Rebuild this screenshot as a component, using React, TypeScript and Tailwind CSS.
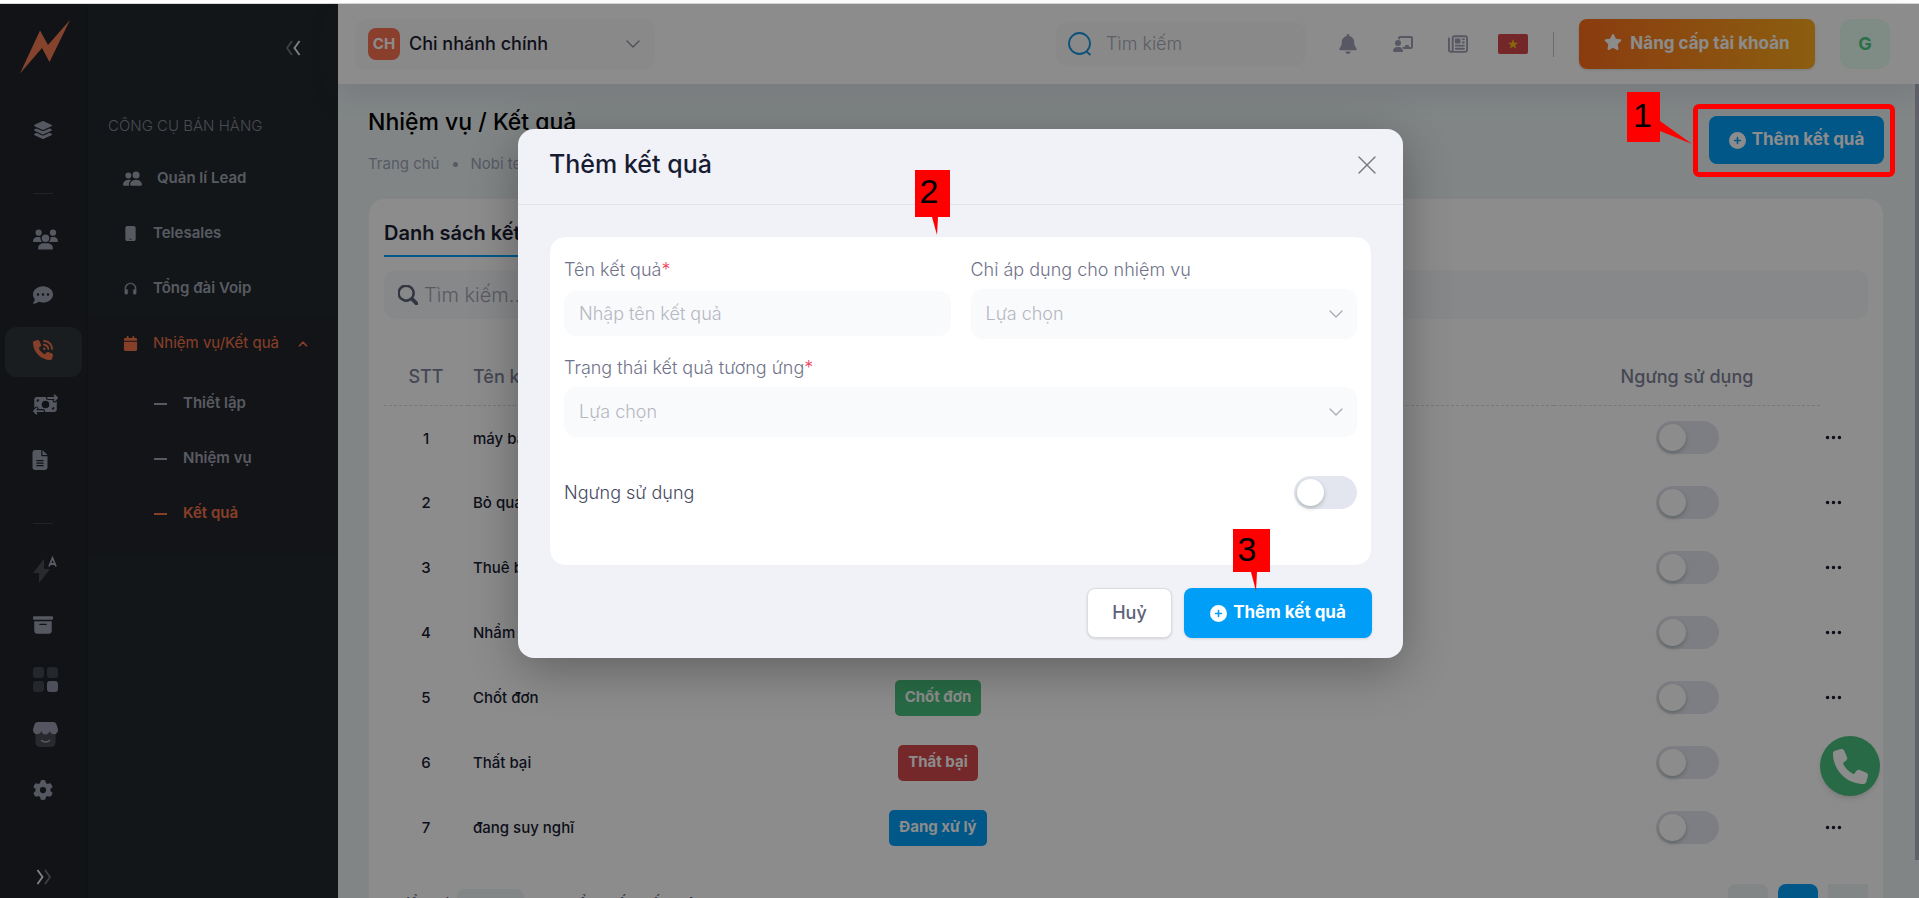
import { useState } from 'react'
import type { ReactNode } from 'react'
import { clsx } from 'clsx'
import {
  FaBell,
  FaCalendar,
  FaChalkboardUser,
  FaCirclePlus,
  FaCommentDots,
  FaFileLines,
  FaGear,
  FaLayerGroup,
  FaMobile,
  FaMoneyBillTransfer,
  FaPhone,
  FaPhoneVolume,
  FaRegNewspaper,
  FaStar,
  FaUsers,
} from 'react-icons/fa6'
import { BsArchiveFill, BsHeadphones, BsPeopleFill, BsSearch, BsThreeDots } from 'react-icons/bs'
import { ChevronDown, ChevronUp, X } from 'lucide-react'

type Result = { id: number; name: string; status: string; tone: string }

const GREEN = 'bg-[#49c17e]'
const RED = 'bg-[#d44a4d]'
const BLUE = 'bg-[#009ef7]'

const RESULTS: Result[] = [
  { id: 1, name: 'máy bận', status: 'Đang xử lý', tone: BLUE },
  { id: 2, name: 'Bỏ qua', status: 'Thất bại', tone: RED },
  { id: 3, name: 'Thuê bao', status: 'Thất bại', tone: RED },
  { id: 4, name: 'Nhầm số', status: 'Thất bại', tone: RED },
  { id: 5, name: 'Chốt đơn', status: 'Chốt đơn', tone: GREEN },
  { id: 6, name: 'Thất bại', status: 'Thất bại', tone: RED },
  { id: 7, name: 'đang suy nghĩ', status: 'Đang xử lý', tone: BLUE },
]

const SUB_ITEMS = ['Thiết lập', 'Nhiệm vụ', 'Kết quả']

function Logo() {
  return (
    <svg width="50" height="54" viewBox="0 0 50 54" fill="#f27b55" aria-hidden="true">
      <path d="M50 0 29.500 42 22 28 0 53.500 20 10.500 28 25z" />
    </svg>
  )
}

function DoubleChevron({ flip = false }: { flip?: boolean }) {
  return (
    <svg width="16" height="16" viewBox="0 0 16 16" fill="none" strokeWidth="1.800" className={flip ? 'rotate-180' : ''}>
      <path d="M7 1 2 8l5 7" stroke="#71737c" />
      <path d="m14.500 1-5 7 5 7" stroke="#f1f1f4" />
    </svg>
  )
}

function AutoIcon() {
  return (
    <svg width="25" height="28" viewBox="0 0 25 28" fill="none">
      <path d="M11 3 0 17h6v10l11-14h-6z" fill="#4c4e55" />
      <path d="M16 10.500 19.500 2 23 10.500M17.200 8h4.600" stroke="#a1a5b7" strokeWidth="1.800" />
    </svg>
  )
}

function GridIcon() {
  return (
    <svg width="25" height="25" viewBox="0 0 25 25" fill="#434751">
      <rect width="11" height="11" rx="3" />
      <rect x="14" width="11" height="11" rx="3" />
      <rect y="14" width="11" height="11" rx="3" />
      <rect x="14" y="14" width="11" height="11" rx="3" fill="#8d90a6" />
    </svg>
  )
}

function StoreIcon() {
  return (
    <svg width="25" height="25" viewBox="0 0 25 25" fill="none">
      <rect x="2.500" y="5" width="20" height="20" rx="4.500" fill="#4a4c54" />
      <path
        d="M5 0h15c2 0 3 1 3.500 2.500L25 7.500c.5 6-7 6-8.300 1.500-1.200 4.500-7.200 4.500-8.400 0C7 13.500-.5 13.500 0 7.500l1.500-5C2 1 3 0 5 0z"
        fill="#9a9caf"
      />
      <path d="M8.500 18.500c2 2 6 2 8 0" stroke="#a1a5b7" strokeWidth="1.500" strokeLinecap="round" />
    </svg>
  )
}

function Flag() {
  return (
    <svg width="30" height="20" viewBox="0 0 30 20" aria-hidden="true">
      <rect width="30" height="20" rx="2" fill="#d4474b" />
      <path d="m15 5 1.300 3.700h3.900l-3.100 2.300 1.200 3.700L15 12.400l-3.300 2.300 1.200-3.700-3.100-2.300h3.900z" fill="#f5bd1c" />
    </svg>
  )
}

function RailButton({ label, children }: { label: string; children: ReactNode }) {
  return (
    <button type="button" aria-label={label} className="flex h-[55px] w-full items-center pl-7 text-[#9c9eb1]">
      {children}
    </button>
  )
}

function RailDivider() {
  return (
    <div className="h-[55px] pt-9">
      <div className="ml-7 w-5 border-t border-[#3f4149]" />
    </div>
  )
}

function Rail() {
  return (
    <nav className="flex w-[88px] shrink-0 flex-col border-r border-[#1e2024] bg-[#222429] px-[5px]">
      <a href="#home" aria-label="Nobi" className="h-[98px] pt-4 pl-[15px]">
        <Logo />
      </a>
      <RailButton label="Tổng quan"><FaLayerGroup size={20} /></RailButton>
      <RailDivider />
      <RailButton label="Khách hàng"><FaUsers size={25} /></RailButton>
      <RailButton label="Tin nhắn"><FaCommentDots size={20} /></RailButton>
      <div className="flex h-[55px] items-end">
        <button
          type="button"
          aria-label="Công cụ bán hàng"
          className="flex h-[50px] w-[77px] items-center rounded-xl bg-[#31363a] pb-1 pl-7 text-[#f4754c]"
        >
          <FaPhoneVolume size={20} />
        </button>
      </div>
      <RailButton label="Giao dịch"><FaMoneyBillTransfer size={25} /></RailButton>
      <RailButton label="Tài liệu"><FaFileLines size={20} className="-ml-[3px]" /></RailButton>
      <RailDivider />
      <RailButton label="Tự động"><AutoIcon /></RailButton>
      <RailButton label="Lưu trữ"><BsArchiveFill size={20} /></RailButton>
      <RailButton label="Ứng dụng"><GridIcon /></RailButton>
      <RailButton label="Cửa hàng"><StoreIcon /></RailButton>
      <RailButton label="Cài đặt"><FaGear size={20} /></RailButton>
      <button type="button" aria-label="Mở rộng" className="mt-auto flex h-[42px] items-center pl-[31px]">
        <DoubleChevron flip />
      </button>
    </nav>
  )
}

function MenuPanel() {
  return (
    <aside className="flex w-[250px] shrink-0 flex-col bg-[#22282c] text-[15px] text-[#a1a5b3]">
      <div className="flex h-20 items-center justify-end pt-2 pr-[37px]">
        <button type="button" aria-label="Thu gọn">
          <DoubleChevron />
        </button>
      </div>
      <h2 className="flex h-[67px] items-center pt-[18px] pl-5 font-light text-[#858996]">CÔNG CỤ BÁN HÀNG</h2>
      <a href="#lead" className="flex h-[55px] items-center pl-[35px] font-semibold">
        <BsPeopleFill size={19} className="mr-[15px]" />
        Quản lí Lead
      </a>
      <a href="#telesales" className="flex h-[55px] items-center pl-[35px] font-semibold">
        <FaMobile size={15} className="mr-[15px]" />
        Telesales
      </a>
      <a href="#voip" className="flex h-[55px] items-center pl-[35px] font-semibold">
        <BsHeadphones size={15} strokeWidth={0.5} className="mr-[15px]" />
        Tổng đài Voip
      </a>
      <div className="bg-[#24262b] pb-4">
        <button type="button" aria-expanded="true" className="flex h-[55px] w-full items-center pr-7 pl-[35px] text-[#f4754c]">
          <FaCalendar size={15} className="mr-[15px]" />
          Nhiệm vụ/Kết quả
          <ChevronUp size={14} strokeWidth={3} className="ml-auto" />
        </button>
        <div className="pt-[5px]">
          {SUB_ITEMS.map((item) => (
            <a
              key={item}
              href="#sub"
              className={clsx(
                'flex h-[55px] items-center pl-[66px] font-semibold',
                item === 'Kết quả' && 'text-[#f4754c]'
              )}
            >
              <span className="mr-4 w-[13px] border-t-2 border-current" />
              {item}
            </a>
          ))}
        </div>
      </div>
    </aside>
  )
}

function TopBar() {
  return (
    <header className="relative z-10 flex h-20 shrink-0 items-center bg-white pr-[29px] pl-[17px] shadow-[0_10px_30px_rgba(82,63,105,0.12)]">
      <button type="button" className="flex h-[51px] w-[300px] items-center rounded-xl bg-[#f9fafc] pr-[10px] pl-[13px]">
        <span className="flex h-8 w-8 items-center justify-center rounded-lg bg-[#f97450] text-[15px] font-bold text-white">
          CH
        </span>
        <span className="ml-[9px] text-lg font-medium text-[#1b1c30]">Chi nhánh chính</span>
        <ChevronDown size={24} strokeWidth={1.25} className="ml-auto text-[#8b8d97]" />
      </button>
      <label className="ml-auto flex h-11 w-[250px] items-center rounded-xl bg-[#f9fafc] px-3 text-[#1794dc]">
        <svg width="24" height="24" viewBox="0 0 24 24" fill="none" stroke="currentColor" strokeWidth="1.800">
          <circle cx="11.500" cy="11.500" r="10.500" />
          <path d="m18.500 19.500 4 3.500" />
        </svg>
        <input
          aria-label="Tìm kiếm"
          placeholder="Tìm kiếm"
          className="ml-[14px] w-0 flex-1 bg-transparent text-lg font-light text-[#1b1c30] outline-none placeholder:text-[#a9abb3]"
        />
      </label>
      <div className="ml-8 flex items-center gap-[35px] text-[#9ea1b4]">
        <button type="button" aria-label="Thông báo"><FaBell size={20} /></button>
        <button type="button" aria-label="Hướng dẫn"><FaChalkboardUser size={20} /></button>
        <button type="button" aria-label="Tin tức"><FaRegNewspaper size={20} /></button>
      </div>
      <button type="button" aria-label="Tiếng Việt" className="ml-[30px]"><Flag /></button>
      <div className="ml-[25px] h-[25px] border-l border-[#c2c3c8]" />
      <button
        type="button"
        className="ml-[25px] flex h-[50px] w-[236px] items-center justify-center gap-2 rounded-lg bg-linear-to-r from-[#fb6d1d] to-[#fdab1d] text-[17px] font-bold text-white shadow-sm"
      >
        <FaStar size={18} className="mb-1" />
        Nâng cấp tài khoản
      </button>
      <button
        type="button"
        className="ml-[25px] h-[50px] w-[50px] rounded-xl bg-[#e8fff3] text-lg font-bold text-[#50cd89]"
      >
        G
      </button>
    </header>
  )
}

function Switch({ label, id }: { label: string; id?: string }) {
  const [on, setOn] = useState(false)
  return (
    <input
      id={id}
      type="checkbox"
      role="switch"
      aria-label={label}
      checked={on}
      onChange={(e) => setOn(e.target.checked)}
      className="block h-[33px] w-[63px] cursor-pointer appearance-none rounded-full bg-[#e4e6ef] p-[3px] before:block before:h-[27px] before:w-[27px] before:rounded-full before:bg-white before:shadow-[0_2px_4px_rgba(0,35,11,0.25)] checked:bg-[#009ef7] checked:before:ml-[30px]"
    />
  )
}

function ResultTable() {
  return (
    <table className="mt-[31px] w-full table-fixed text-[15px] font-medium text-[#181c32]">
      <colgroup>
        <col className="w-[84px]" />
        <col className="w-[337px]" />
        <col className="w-[266px]" />
        <col />
        <col className="w-[266px]" />
        <col className="w-12" />
      </colgroup>
      <thead>
        <tr className="h-[55px] text-lg text-[#7e8299]">
          <th className="border-b border-dashed border-[#d8dae3] font-medium">STT</th>
          <th className="border-b border-dashed border-[#d8dae3] pl-[5px] text-left font-medium">Tên kết quả</th>
          <th className="border-b border-dashed border-[#d8dae3] font-medium">Trạng thái</th>
          <th className="border-b border-dashed border-[#d8dae3] font-medium">Nhiệm vụ</th>
          <th className="border-b border-dashed border-[#d8dae3] font-medium">Ngưng sử dụng</th>
          <th />
        </tr>
      </thead>
      <tbody>
        {RESULTS.map((row) => (
          <tr key={row.id} className="h-[65px]">
            <td className="pt-[2px] text-center">{row.id}</td>
            <td className="pt-[2px] pl-[5px]">{row.name}</td>
            <td className="text-center">
              <span className={clsx('inline-flex h-9 items-center rounded-[5px] px-[10px] font-bold text-white', row.tone)}>
                {row.status}
              </span>
            </td>
            <td />
            <td>
              <div className="flex justify-center">
                <Switch label={`Ngưng sử dụng ${row.name}`} />
              </div>
            </td>
            <td>
              <button type="button" aria-label="Thao tác" className="block pl-1">
                <BsThreeDots size={19} />
              </button>
            </td>
          </tr>
        ))}
      </tbody>
    </table>
  )
}

function ResultPage() {
  return (
    <main className="min-w-0 flex-1 overflow-hidden bg-[#ebf3f4] pr-[31px] pl-[30px]">
      <div className="flex items-start justify-between pt-[22px] pb-6">
        <div>
          <h1 className="text-[23px] leading-8 font-medium text-black">Nhiệm vụ / Kết quả</h1>
          <nav className="mt-4 flex items-center text-[15px] leading-5 text-[#a1a5b7]">
            <a href="#home">Trang chủ</a>
            <span className="mx-[13px] h-[5px] w-[5px] rounded-full bg-current" />
            <a href="#team">Nobi team</a>
          </nav>
        </div>
        <button
          type="button"
          className="mt-[10px] flex h-12 w-[175px] items-center justify-center gap-[6px] rounded-lg bg-[#009ef7] text-[17px] font-bold text-white"
        >
          <FaCirclePlus size={17} />
          Thêm kết quả
        </button>
      </div>

      <section className="rounded-2xl border border-[#eff2f5] bg-white px-[15px] pt-[17px]">
        <button type="button" className="h-[41px] border-b-2 border-[#009ef7] pb-[5px] text-xl font-semibold text-[#181c32]">
          Danh sách kết quả
        </button>
        <label className="mt-[13px] flex h-[49px] items-center rounded-xl bg-[#f6f8fb] px-[14px] text-[#5e6278]">
          <BsSearch size={20} strokeWidth={1} />
          <input
            aria-label="Tìm kiếm kết quả"
            placeholder="Tìm kiếm..."
            className="ml-[6px] flex-1 bg-transparent text-xl font-light outline-none placeholder:text-[#a3a5ae]"
          />
        </label>
        <ResultTable />
        <div className="mt-6 flex items-center pl-[11px] text-[15px] text-[#5e6278]">
          Hiển thị
          <select aria-label="Số dòng" className="mx-2 h-[30px] w-[67px] appearance-none rounded-lg bg-[#eff5f6] pl-4">
            <option>10</option>
          </select>
          trong tổng số 7 kết quả
          <div className="ml-auto flex gap-[10px]">
            <button type="button" aria-label="Trang trước" className="h-10 w-10 rounded-lg bg-[#eff5f6]">‹</button>
            <button type="button" className="h-10 w-10 rounded-lg bg-[#009ef7] text-white">1</button>
            <button type="button" aria-label="Trang sau" className="h-10 w-10 bg-[#eff5f6]">›</button>
          </div>
        </div>
      </section>
    </main>
  )
}

function SelectField({ id }: { id: string }) {
  return (
    <div className="relative">
      <select
        id={id}
        defaultValue=""
        className="block h-[50px] w-full appearance-none rounded-xl bg-[#f9fafc] px-[15px] text-lg font-light text-[#b5b7bf] outline-none"
      >
        <option value="">Lựa chọn</option>
      </select>
      <ChevronDown
        size={24}
        strokeWidth={1.25}
        className="pointer-events-none absolute top-[13px] right-[9px] text-[#a9abb3]"
      />
    </div>
  )
}

function Required() {
  return <span className="text-[#f1415c]">*</span>
}

function AddResultDialog() {
  return (
    <form
      role="dialog"
      aria-labelledby="dialog-title"
      className="mt-[125px] w-full max-w-[885px] self-start rounded-2xl bg-[#f1f2f7] shadow-[0_12px_48px_rgba(0,0,0,0.3)]"
    >
      <div className="flex h-[76px] items-center justify-between border-b border-[#e3e4e9] pr-5 pb-1 pl-[31px]">
        <h2 id="dialog-title" className="text-[25px] font-medium text-[#181c32]">Thêm kết quả</h2>
        <button type="button" aria-label="Đóng">
          <X size={32} strokeWidth={1} className="text-[#77787d]" />
        </button>
      </div>
      <div className="px-[31px] pt-[31px]">
        <div className="rounded-2xl border border-[#f0f1f5] bg-white px-[14px] pt-[17px] pb-14 text-lg font-light">
          <div className="grid grid-cols-2 gap-5">
            <div>
              <label htmlFor="result-name" className="block h-[37px] leading-8 text-[#6f728a]">
                Tên kết quả<Required />
              </label>
              <input
                id="result-name"
                placeholder="Nhập tên kết quả"
                className="block h-[45px] w-full rounded-xl bg-[#f9fafc] px-[15px] text-[#181c32] outline-none placeholder:text-[#b5b7bf]"
              />
            </div>
            <div>
              <label htmlFor="task" className="block h-[35px] leading-8 text-[#6f728a]">
                Chỉ áp dụng cho nhiệm vụ
              </label>
              <SelectField id="task" />
            </div>
          </div>
          <label htmlFor="state" className="mt-[13px] block h-[35px] leading-8 text-[#6f728a]">
            Trạng thái kết quả tương ứng<Required />
          </label>
          <SelectField id="state" />
          <div className="mt-[39px] flex items-center justify-between">
            <label htmlFor="stop-using" className="text-[#464a60]">Ngưng sử dụng</label>
            <Switch id="stop-using" label="Ngưng sử dụng" />
          </div>
        </div>
      </div>
      <div className="flex justify-end gap-3 px-[31px] pt-[22px] pb-5">
        <button
          type="button"
          className="h-[50px] w-[85px] rounded-lg border border-[#dcdde3] bg-white text-lg font-medium text-[#5e6278] shadow-sm"
        >
          Huỷ
        </button>
        <button
          type="button"
          className="flex h-[50px] w-[188px] items-center justify-center gap-[6px] rounded-lg bg-[#009ef7] text-[17px] font-bold text-white shadow-sm"
        >
          <FaCirclePlus size={17} />
          Thêm kết quả
        </button>
      </div>
    </form>
  )
}

/* Numbered guide markers that float over the page */
function GuideMarkers() {
  return (
    <div className="pointer-events-none absolute inset-0 z-40 font-['Liberation_Sans',Arial,sans-serif] text-[34px] text-black">
      <div className="absolute top-[104px] right-6 h-[73px] w-[202px] rounded-md border-[5px] border-[#fe0000]" />
      <div className="absolute top-[92px] right-[259px] h-[50px] w-[33px] bg-[#fe0000] pl-[6px] leading-[46px]">
        1
        <svg width="32" height="24" viewBox="0 0 32 24" fill="#fe0000" className="absolute top-[29px] left-[33px]">
          <path d="M0 0v10l32 13z" />
        </svg>
      </div>
      <div className="absolute top-[170px] left-1/2 -ml-[45px] h-[47px] w-[35px] bg-[#fe0000] pl-[5px] leading-[43px]">
        2
        <svg width="8" height="18" viewBox="0 0 8 18" fill="#fe0000" className="absolute top-[47px] left-[17px]">
          <path d="M0 0h6l-1 18z" />
        </svg>
      </div>
      <div className="absolute top-[529px] left-1/2 ml-[273px] h-[43px] w-[37px] bg-[#fe0000] pl-[5px] leading-[40px]">
        3
        <svg width="8" height="19" viewBox="0 0 8 19" fill="#fe0000" className="absolute top-[43px] left-[18px]">
          <path d="M0 0h6l-1 19z" />
        </svg>
      </div>
    </div>
  )
}

export default function App() {
  return (
    <div className="relative flex h-screen flex-col overflow-hidden font-[Inter,sans-serif]">
      <div className="h-1 shrink-0 border-b border-[#d9d9d9] bg-white" />
      <div className="relative flex min-h-0 flex-1">
        <Rail />
        <MenuPanel />
        <div className="flex min-w-0 flex-1 flex-col">
          <TopBar />
          <div className="flex min-h-0 flex-1 bg-[#ebf3f4]">
            <ResultPage />
            <div className="mb-[38px] w-1 bg-[#b1b1c2]" />
          </div>
        </div>
        <button
          type="button"
          aria-label="Gọi điện"
          className="absolute right-[39px] bottom-[102px] flex h-[60px] w-[60px] items-center justify-center rounded-full bg-[#49c17e] text-white shadow-md"
        >
          <FaPhone size={35} />
        </button>
        <div className="absolute inset-0 z-30 flex justify-center bg-black/45 pl-[2px]">
          <AddResultDialog />
        </div>
      </div>
      <GuideMarkers />
    </div>
  )
}
